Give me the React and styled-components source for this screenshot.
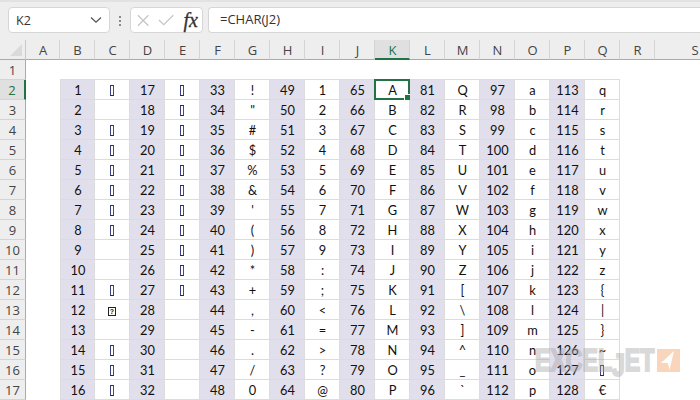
import React from "react";
import styled, { createGlobalStyle } from "styled-components";

const Global = createGlobalStyle`
  html, body { margin: 0; padding: 0; background: #fff; }
  body { width: 700px; height: 400px; overflow: hidden; font-family: "Lato", "Liberation Sans", sans-serif; }
`;

const Page = styled.div`
  position: relative;
  width: 700px;
  height: 400px;
  overflow: hidden;
  display: flex;
  flex-direction: column;
`;

const FormulaBar = styled.div`
  height: 40px;
  flex: none;
  box-sizing: border-box;
  background: #eeeeee;
  border-top: 2px solid #e2e2e2;
  padding: 5px 0 0 8px;
  display: flex;
  align-items: flex-start;
`;

const NameBox = styled.div`
  width: 102px;
  height: 26px;
  box-sizing: border-box;
  background: #fff;
  border: 1px solid #d6d6d6;
  border-radius: 4px;
  display: flex;
  align-items: center;
  justify-content: space-between;
  padding: 0 6px 0 7px;
  font: 12.5px "Open Sans", sans-serif;
  color: #333;
`;

const Dots = styled.div`
  width: 2px;
  margin: 8px 9px 0 9px;
  height: 12px;
  background-image: radial-gradient(circle, #8a8a8a 1px, transparent 1.2px);
  background-size: 2px 4px;
`;

const FxBox = styled.div`
  width: 73px;
  height: 26px;
  box-sizing: border-box;
  background: #fff;
  border: 1px solid #d6d6d6;
  border-radius: 4px;
  display: flex;
  align-items: center;
  padding: 0 4px 0 6px;
  gap: 9px;
`;

const FxLabel = styled.i`
  font: italic 20px/22px "Liberation Serif", serif;
  color: #333;
  margin-left: auto;
  -webkit-text-stroke: 0.3px #333;
`;

const FormulaInput = styled.div`
  margin-left: 5px;
  flex: 1;
  height: 26px;
  box-sizing: border-box;
  background: #fff;
  border: 1px solid #d6d6d6;
  border-right: none;
  border-radius: 4px 0 0 4px;
  padding-left: 11px;
  font: 13px/23px "Open Sans", sans-serif;
  color: #333;
`;

const Sheet = styled.div`
  display: grid;
  grid-template-columns: 26px 34px repeat(17, 35px) 80px;
  grid-auto-rows: 20px;
  flex: none;
`;

const Corner = styled.div`
  background: #eeeeee;
  border-right: 1px solid #c8c8c8;
  border-bottom: 1px solid #aaa;
  box-sizing: border-box;
  position: relative;
  &::after {
    content: "";
    position: absolute;
    right: 3px;
    bottom: 3px;
    border-style: solid;
    border-width: 0 0 12px 12px;
    border-color: transparent transparent #dadada transparent;
  }
`;

const ColHead = styled.div`
  box-sizing: border-box;
  background: ${(p) => (p.$active ? "#e0e0e0" : "#eeeeee")};
  border-right: 1px solid ${(p) => (p.$last ? "#eeeeee" : "#d4d4d4")};
  border-bottom: ${(p) => (p.$active ? "2px solid #217346" : "1px solid #aaa")};
  color: ${(p) => (p.$active ? "#217346" : "#444")};
  font: 13px/20px "Open Sans", sans-serif;
  padding-left: 1px;
  text-align: center;
`;

const RowHead = styled.div`
  box-sizing: border-box;
  background: ${(p) => (p.$active ? "#e0e0e0" : "#eeeeee")};
  border-bottom: 1px solid #d4d4d4;
  border-right: ${(p) => (p.$active ? "2px solid #217346" : "1px solid #aaa")};
  color: ${(p) => (p.$active ? "#217346" : "#444")};
  font: 13px/20px "Open Sans", sans-serif;
  text-align: center;
`;

const Blank = styled.div`
  background: #fff;
`;

const Cell = styled.div`
  position: relative;
  box-sizing: border-box;
  background: ${(p) => (p.$code ? "#e2dfed" : "#fff")};
  border-right: 1px solid #dcdcdc;
  border-top: ${(p) => (p.$first ? "1px solid #dcdcdc" : "none")};
  margin-top: ${(p) => (p.$first ? "-1px" : "0")};
  border-bottom: 1px solid #dcdcdc;
  border-left: ${(p) => (p.$leftEdge ? "1px solid #dcdcdc" : "none")};
  padding-left: 1px;
  color: #111;
  font: 12.8px/20px "Lato", "Liberation Sans", sans-serif;
  text-align: center;
  white-space: pre;
`;

const Selection = styled.div`
  position: absolute;
  left: -1px;
  top: -1px;
  right: -1px;
  bottom: -1px;
  border: 2px solid #217346;
  &::after {
    content: "";
    position: absolute;
    right: -3px;
    bottom: -3px;
    width: 5px;
    height: 5px;
    background: #217346;
    border: 1px solid #fff;
  }
`;

const Tofu = styled.span`
  display: inline-block;
  width: 4px;
  height: 11px;
  box-sizing: border-box;
  border: 1px solid #2a2a38;
  border-left-color: #3b3f7a;
  border-right-color: #7a3b3b;
  vertical-align: -1px;
  margin-right: 1px;
`;

const BoxQ = styled.span`
  display: inline-block;
  width: 8px;
  height: 9px;
  box-sizing: border-box;
  border: 1px solid #20202c;
  font: bold 7px/7px "Liberation Sans", sans-serif;
  text-align: center;
  vertical-align: 1px;
  margin-right: 1px;
`;

const Watermark = styled.div`
  position: absolute;
  left: 535px;
  top: 349px;
  width: 145px;
  display: flex;
  align-items: flex-start;
  justify-content: space-between;
  pointer-events: none;
`;

const WatermarkText = styled.span`
  display: block;
  width: 120px;
  font: bold 31px/23px "Liberation Sans", sans-serif;
  color: #a6a6a6;
  -webkit-text-stroke: 2px #a6a6a6;
  opacity: 0.42;
  transform: scaleX(0.745);
  transform-origin: left top;
  white-space: nowrap;
`;

const WatermarkJ = styled.span`
  display: inline-block;
  transform: translateY(5px);
`;

const Chevron = () => (
  <svg width="14" height="8" viewBox="0 0 14 8" fill="none" stroke="#555" strokeWidth="1.3">
    <path d="M2 1.5 L7 6.2 L12 1.5" />
  </svg>
);

const Cross = () => (
  <svg width="13" height="13" viewBox="0 0 13 13" fill="none" stroke="#c4c4c4" strokeWidth="1.2">
    <path d="M1 1 L12 12 M12 1 L1 12" />
  </svg>
);

const Check = () => (
  <svg width="17" height="12" viewBox="0 0 17 12" fill="none" stroke="#c4c4c4" strokeWidth="1.2">
    <path d="M1 6 L6 11 L16 1" />
  </svg>
);

const JetMark = () => (
  <svg width="23" height="23" viewBox="0 0 23 23" style={{ flex: "none" }}>
    <rect width="23" height="23" fill="#f9d6bb" />
    <path d="M4 14 L17 2 L12.5 21 L11 14 Z" fill="#fff" />
  </svg>
);

const columns = "ABCDEFGHIJKLMNOPQRS".split("");
const blanks = [2, 9, 10, 13, 28, 29, 30, 31, 32];

const charFor = (code) => {
  if (code === 12) return <BoxQ>?</BoxQ>;
  if (code === 127) return <Tofu />;
  if (code === 128) return "€";
  if (code >= 33) return String.fromCharCode(code);
  if (blanks.includes(code)) return "";
  return <Tofu />;
};

export default function App() {
  const rows = Array.from({ length: 16 }, (_, i) => i);
  return (
    <Page>
      <Global />
      <FormulaBar>
        <NameBox>
          K2
          <Chevron />
        </NameBox>
        <Dots />
        <FxBox>
          <Cross />
          <Check />
          <FxLabel>fx</FxLabel>
        </FxBox>
        <FormulaInput>=CHAR(J2)</FormulaInput>
      </FormulaBar>
      <Sheet>
        <Corner />
        {columns.map((c) => (
          <ColHead key={c} $active={c === "K"} $last={c === "S"}>
            {c}
          </ColHead>
        ))}
        <RowHead>1</RowHead>
        {columns.map((c) => (
          <Blank key={c} />
        ))}
        {rows.map((r) => (
          <React.Fragment key={r}>
            <RowHead $active={r === 0}>{r + 2}</RowHead>
            <Blank />
            {Array.from({ length: 16 }, (_, c) => {
              const group = Math.floor(c / 2);
              const value = group * 16 + r + 1;
              const isCode = c % 2 === 0;
              return (
                <Cell key={c} $code={isCode} $first={r === 0} $leftEdge={c === 0}>
                  {isCode ? value : charFor(value)}
                  {value === 65 && !isCode && <Selection />}
                </Cell>
              );
            })}
            <Blank />
            <Blank />
          </React.Fragment>
        ))}
      </Sheet>
      <Watermark>
        <WatermarkText>
          EXCEL<WatermarkJ>J</WatermarkJ>ET
        </WatermarkText>
        <JetMark />
      </Watermark>
    </Page>
  );
}
